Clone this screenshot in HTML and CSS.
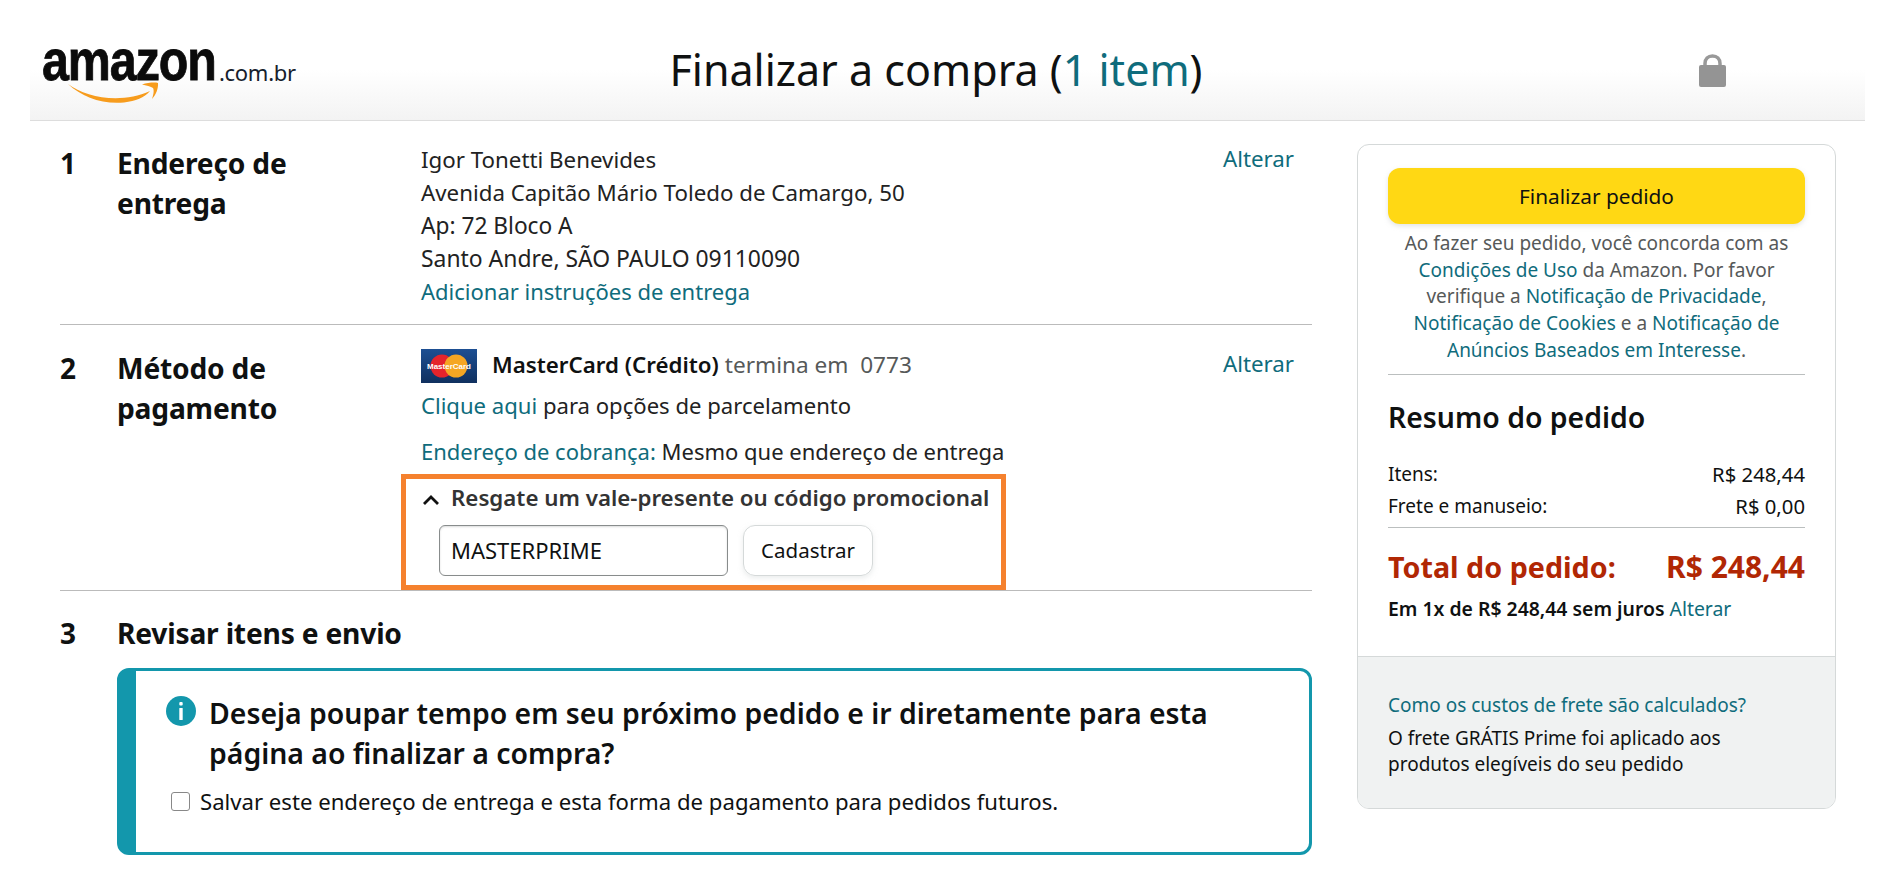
FILE: index.html
```html
<!DOCTYPE html>
<html lang="pt-BR">
<head>
<meta charset="utf-8">
<title>Finalizar a compra</title>
<link rel="stylesheet" href="styles.css">
</head>
<body>
<header class="top">
  <div class="logo">
    <span class="logo-word">amazon</span><span class="logo-tld">.com.br</span>
    <svg class="smile" viewBox="0 0 96 24" width="96" height="24"><path d="M2 4C20 18 56 24 84 11C78 18 70 21 58 22.500C36 24.500 16 17 2 4Z" fill="#F79C1D"/><path d="M76 4.500C82 2.500 89 2 92 3C92.500 8 90 15 86 19C88 13 88 10 87 8C85 6.500 80 5.500 76 4.500Z" fill="#F79C1D"/></svg>
  </div>
  <h1 class="title">Finalizar a compra (<a class="link">1 item</a>)</h1>
  <svg class="lock" viewBox="0 0 27 33" width="27" height="33"><path d="M6 14V9.500C6 5 9 2 13.500 2S21 5 21 9.500V14" fill="none" stroke="#999" stroke-width="3.500"/><rect x="0" y="11" width="27" height="22" rx="2" fill="#949494"/></svg>
</header>
<div class="layout">
  <main class="steps">
    <section class="step">
      <div class="num">1</div>
      <h2 class="step-title">Endereço de entrega</h2>
      <div class="step-body">
        <div class="line line-m">Igor Tonetti Benevides</div>
        <div class="line line-m">Avenida Capitão Mário Toledo de Camargo, 50</div>
        <div class="line line-l">Ap: 72 Bloco A</div>
        <div class="line line-xl">Santo Andre, SÃO PAULO 09110090</div>
        <div class="line"><a class="link">Adicionar instruções de entrega</a></div>
      </div>
      <a class="link change">Alterar</a>
    </section>
    <section class="step step-pay">
      <div class="num">2</div>
      <h2 class="step-title">Método de pagamento</h2>
      <div class="step-body">
        <div class="card-line">
          <svg class="card" viewBox="0 0 56 34" width="56" height="34">
            <defs><linearGradient id="cg" x1="0" y1="0" x2="0" y2="1"><stop offset="0" stop-color="#1d4f93"/><stop offset="1" stop-color="#10305f"/></linearGradient></defs>
            <rect width="56" height="34" fill="url(#cg)"/>
            <circle cx="21" cy="17" r="11.500" fill="#E5242C"/>
            <circle cx="35" cy="17" r="11.500" fill="#F5A623"/>
            <text class="card-text" x="28" y="19.500" text-anchor="middle">MasterCard</text>
          </svg>
          <span class="card-name">MasterCard (Crédito)</span>
          <span class="card-end">termina em&nbsp; 0773</span>
        </div>
        <div class="line install"><a class="link">Clique aqui</a> para opções de parcelamento</div>
        <div class="line billing"><a class="link">Endereço de cobrança:</a> Mesmo que endereço de entrega</div>
        <div class="promo">
          <div class="promo-head">
            <svg class="chev" viewBox="0 0 18 12" width="18" height="12"><path d="M2 10L9 3L16 10" fill="none" stroke="#111" stroke-width="2.800"/></svg>
            <span>Resgate um vale-presente ou código promocional</span>
          </div>
          <div class="promo-form">
            <div class="input">MASTERPRIME</div>
            <div class="btn-light">Cadastrar</div>
          </div>
        </div>
      </div>
      <a class="link change">Alterar</a>
    </section>
    <section class="step3">
      <div class="step3-head">
        <div class="num">3</div>
        <h2 class="step-title">Revisar itens e envio</h2>
      </div>
      <div class="alert">
        <div class="alert-head">
          <svg class="info" viewBox="0 0 30 30" width="30" height="30"><circle cx="15" cy="15" r="15" fill="#1397AC"/><rect x="13.300" y="6" width="3.400" height="3.600" rx="1" fill="#fff"/><rect x="13.300" y="12" width="3.400" height="12" rx=".5" fill="#fff"/></svg>
          <h3 class="alert-title">Deseja poupar tempo em seu próximo pedido e ir diretamente para esta página ao finalizar a compra?</h3>
        </div>
        <div class="check-row"><span class="check"></span><span>Salvar este endereço de entrega e esta forma de pagamento para pedidos futuros.</span></div>
      </div>
    </section>
  </main>
  <aside class="side">
    <div class="side-top">
      <div class="btn-primary">Finalizar pedido</div>
      <p class="terms">Ao fazer seu pedido, você concorda com as <a class="link">Condições de Uso</a> da Amazon. Por favor verifique a <a class="link">Notificação de Privacidade</a>, <a class="link">Notificação de Cookies</a> e a <a class="link">Notificação de Anúncios Baseados em Interesse</a>.</p>
      <hr class="rule">
      <h2 class="summary-title">Resumo do pedido</h2>
      <div class="row"><span>Itens:</span><span class="amount">R$ 248,44</span></div>
      <div class="row"><span>Frete e manuseio:</span><span class="amount">R$ 0,00</span></div>
      <hr class="rule rule-total">
      <div class="total"><span>Total do pedido:</span><span class="total-value">R$ 248,44</span></div>
      <div class="instal"><b>Em 1x de R$ 248,44 sem juros</b> <a class="link">Alterar</a></div>
    </div>
    <div class="side-foot">
      <a class="link">Como os custos de frete são calculados?</a>
      <p class="foot-text">O frete GRÁTIS Prime foi aplicado aos produtos elegíveis do seu pedido</p>
    </div>
  </aside>
</div>
</body>
</html>
```
FILE: styles.css
```css
* { box-sizing: border-box; }
html, body { margin: 0; padding: 0; height: 871px; overflow: hidden; background: #fff; }
body { font-family: "Noto Sans", "Open Sans", sans-serif; color: #0F1111; font-size: 20px; }
.link { color: #0F6C7C; text-decoration: none; }

.top {
  margin: 0 29px 0 30px;
  height: 121px;
  display: flex;
  align-items: flex-start;
  background: linear-gradient(to bottom, #fff 70px, #f3f3f3 120px);
  border-bottom: 1px solid #ddd;
}
.logo { position: relative; width: 610px; height: 100px; flex: none; padding: 30px 0 0 12px; display: flex; align-items: flex-start; }
.logo-word {
  display: block; width: 177px; flex: none;
  font-family: "Liberation Sans", sans-serif; font-weight: 700; font-size: 57px; line-height: 60px; letter-spacing: -1.300px;
  color: #0b0b0b; transform: scaleX(.85); transform-origin: left center; -webkit-text-stroke: .8px #0b0b0b;
}
.logo-tld { font-size: 22px; line-height: 30px; margin-top: 27px; color: #16202c; font-weight: 400; letter-spacing: -.3px; }
.smile { position: absolute; left: 36px; top: 80px; }
.title { margin: 44px 0 0; width: 592px; text-align: center; font-size: 43px; line-height: 52px; font-weight: 400; white-space: nowrap; }
.lock { margin: 54px 0 0 467px; flex: none; }

.layout { display: flex; align-items: flex-start; margin-left: 60px; }
.steps { width: 1252px; flex: none; }
.step { display: grid; grid-template-columns: 57px 304px 1fr auto; padding: 22px 18px 15px 0; border-bottom: 1px solid #bbb; height: 204px; }
.step-pay { height: 266px; padding-top: 23px; padding-bottom: 0; }
.num { font-size: 28px; line-height: 40px; font-weight: 700; }
.step-title { margin: 0; font-size: 28.200px; line-height: 40px; font-weight: 700; width: 220px; letter-spacing: -.2px; }
.line { line-height: 33px; font-size: 22px; color: #222; white-space: nowrap; }
.line-m { font-size: 22.300px; }
.line-l { font-size: 22.700px; }
.line-xl { font-size: 22.900px; }
.change { font-size: 22.300px; line-height: 28px; margin-top: 2px; }

.card-line { display: flex; align-items: center; height: 34px; margin-top: 1px; font-size: 22.300px; white-space: nowrap; }
.card { flex: none; margin-right: 15px; }
.card-text { font-size: 8px; font-weight: 700; fill: #fff; font-family: "Liberation Sans", sans-serif; }
.card-name { font-weight: 600; margin-bottom: 4px; }
.card-end { color: #565959; margin: 0 0 4px 6px; font-size: 22.600px; }
.install { margin-top: 6px; font-size: 22.100px; }
.billing { margin-top: 13px; }

.promo { margin: 6px 0 0 -20px; width: 605px; height: 116px; border: 5px solid #F5812E; padding: 0 0 0 16px; }
.promo-head { display: flex; align-items: center; height: 34px; margin-top: 1px; margin-bottom: 11px; font-size: 22.300px; font-weight: 600; color: #333; white-space: nowrap; }
.chev { margin-right: 11px; margin-top: 6px; flex: none; }
.promo-form { display: flex; gap: 15px; margin: 0 0 0 17px; align-items: flex-start; }
.input { width: 289px; height: 51px; border: 1px solid #888C8C; border-radius: 6px; padding: 0 11px; line-height: 49px; font-size: 22px; box-shadow: inset 0 1px 2px rgba(15,17,17,.15); }
.btn-light { width: 130px; height: 51px; border: 1px solid #D5D9D9; border-radius: 12px; text-align: center; line-height: 49px; font-size: 20.500px; box-shadow: 0 2px 5px rgba(213,217,217,.5); }

.step3-head { display: grid; grid-template-columns: 57px 1fr; margin-top: 22px; }
.step3-head .step-title { width: auto; line-height: 40px; }
.alert { margin: 15px 0 0 57px; height: 187px; border: 3px solid #1397AC; border-left-width: 19px; border-radius: 12px; padding: 22px 20px 0 30px; }
.alert-head { display: flex; gap: 13px; }
.info { flex: none; margin-top: 3px; }
.alert-title { margin: 0; font-size: 28.400px; line-height: 40px; font-weight: 600; }
.check-row { display: flex; align-items: center; gap: 10px; margin: 14px 0 0 5px; font-size: 22.150px; line-height: 28px; white-space: nowrap; }
.check { width: 19px; height: 19px; flex: none; border: 1.500px solid #888; border-radius: 3px; }

.side { margin: 23px 0 0 45px; width: 479px; height: 665px; flex: none; border: 1px solid #D5D9D9; border-radius: 12px; overflow: hidden; display: flex; flex-direction: column; }
.side-top { padding: 23px 30px 0; height: 511px; }
.btn-primary { height: 56px; background: #FFD814; border-radius: 12px; text-align: center; line-height: 57px; font-size: 20.800px; box-shadow: 0 2px 5px rgba(213,217,217,.7); }
.terms { margin: 6px 0 0; text-align: center; font-size: 19px; line-height: 26.700px; color: #565959; }
.rule { border: 0; border-top: 1px solid #BBBFBF; margin: 10px 0 0; }
.summary-title { margin: 22px 0 0; font-size: 28.400px; line-height: 40px; font-weight: 600; }
.row { display: flex; justify-content: space-between; font-size: 19px; line-height: 32px; }
.summary-title + .row { margin-top: 21px; }
.amount { font-size: 20.300px; }
.rule-total { margin-top: 5px; }
.total { display: flex; justify-content: space-between; margin-top: 19px; font-size: 28.700px; line-height: 40px; font-weight: 700; color: #B12704; }
.total-value { font-size: 30px; }
.instal { margin-top: 9px; font-size: 19.400px; line-height: 26px; }
.instal b { font-weight: 600; }
.side-foot { flex: 1; background: #F0F2F2; border-top: 1px solid #D5D9D9; padding: 35px 30px 0; font-size: 19px; line-height: 26.500px; }
.foot-text { margin: 6px 0 0; }
```
